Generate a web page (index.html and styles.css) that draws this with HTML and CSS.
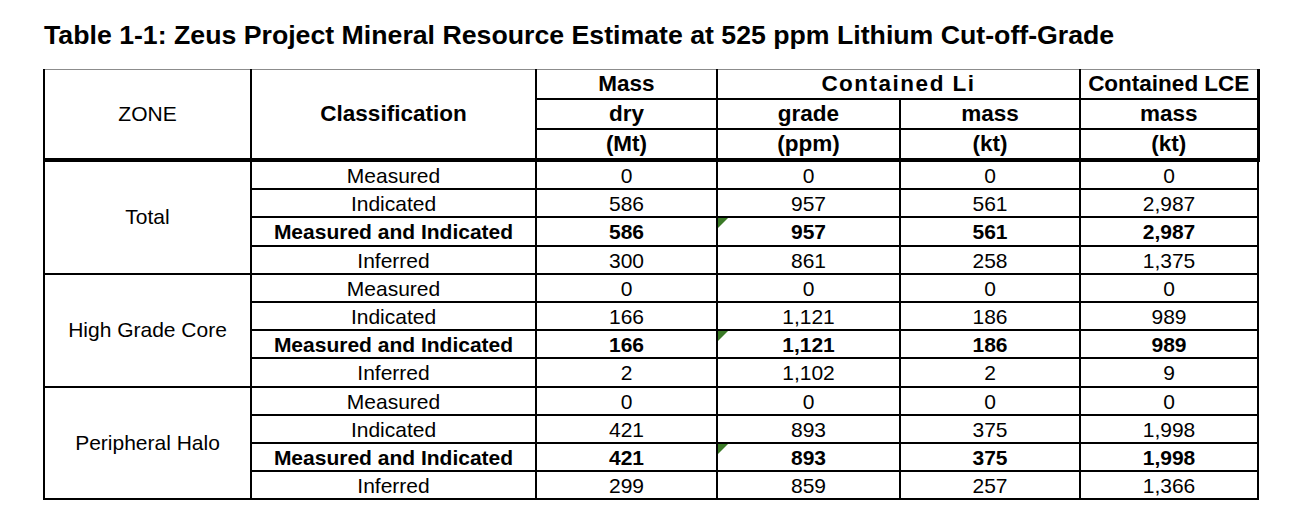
FILE: index.html
```html
<!DOCTYPE html>
<html lang="en">
<head>
<meta charset="utf-8">
<title>Zeus Project Mineral Resource Estimate</title>
<link rel="stylesheet" href="styles.css">
</head>
<body>
<h1 class="title">Table 1-1: Zeus Project Mineral Resource Estimate at 525 ppm Lithium Cut-off-Grade</h1>
<table class="resource">
  <colgroup>
    <col class="c-zone">
    <col class="c-class">
    <col class="c-mass">
    <col class="c-grade">
    <col class="c-limass">
    <col class="c-lce">
  </colgroup>
  <thead>
    <tr class="h1">
      <th rowspan="3" class="zone-h">ZONE</th>
      <th rowspan="3" class="class-h">Classification</th>
      <th>Mass</th>
      <th colspan="2" class="li-h">Contained Li</th>
      <th class="last">Contained LCE</th>
    </tr>
    <tr>
      <th>dry</th>
      <th>grade</th>
      <th>mass</th>
      <th class="last">mass</th>
    </tr>
    <tr class="h3">
      <th>(Mt)</th>
      <th>(ppm)</th>
      <th>(kt)</th>
      <th class="last">(kt)</th>
    </tr>
  </thead>
  <tbody>
    <tr><td rowspan="4" class="zone">Total</td><td>Measured</td><td>0</td><td>0</td><td>0</td><td>0</td></tr>
    <tr><td>Indicated</td><td>586</td><td>957</td><td>561</td><td>2,987</td></tr>
    <tr class="sum"><td>Measured and Indicated</td><td>586</td><td class="flag">957</td><td>561</td><td>2,987</td></tr>
    <tr><td>Inferred</td><td>300</td><td>861</td><td>258</td><td>1,375</td></tr>

    <tr><td rowspan="4" class="zone">High Grade Core</td><td>Measured</td><td>0</td><td>0</td><td>0</td><td>0</td></tr>
    <tr><td>Indicated</td><td>166</td><td>1,121</td><td>186</td><td>989</td></tr>
    <tr class="sum"><td>Measured and Indicated</td><td>166</td><td class="flag">1,121</td><td>186</td><td>989</td></tr>
    <tr><td>Inferred</td><td>2</td><td>1,102</td><td>2</td><td>9</td></tr>

    <tr><td rowspan="4" class="zone">Peripheral Halo</td><td>Measured</td><td>0</td><td>0</td><td>0</td><td>0</td></tr>
    <tr><td>Indicated</td><td>421</td><td>893</td><td>375</td><td>1,998</td></tr>
    <tr class="sum"><td>Measured and Indicated</td><td>421</td><td class="flag">893</td><td>375</td><td>1,998</td></tr>
    <tr><td>Inferred</td><td>299</td><td>859</td><td>257</td><td>1,366</td></tr>
  </tbody>
</table>
</body>
</html>
```
FILE: styles.css
```css
html, body {
  margin: 0;
  padding: 0;
  background: #ffffff;
  color: #000000;
  font-family: "Liberation Sans", Arial, sans-serif;
}

.title {
  margin: 20px 0 0 44px;
  font-size: 26.7px;
  line-height: 30px;
  font-weight: bold;
  letter-spacing: 0;
}

.resource {
  margin: 19px 0 0 43px;
  border-collapse: collapse;
  table-layout: fixed;
  width: 1214px;
}

.c-zone { width: 207px; }
.c-class { width: 285px; }
.c-mass { width: 181px; }
.c-grade { width: 183px; }
.c-limass { width: 180px; }
.c-lce { width: 178px; }

.resource th,
.resource td {
  border: 2px solid #000;
  padding: 0;
  text-align: center;
  vertical-align: middle;
  white-space: nowrap;
}

.resource th {
  height: 28px;
  font-size: 22.5px;
  font-weight: bold;
  line-height: 26px;
}

.resource .h1 th {
  border-top: 1px solid #8c8c8c;
}

.resource .h3 th,
.resource th[rowspan] {
  border-bottom: 4px solid #000;
}

.resource th.last {
  border-right: 3px solid #000;
}

.resource th.zone-h {
  font-weight: normal;
  font-size: 21px;
}

.resource th.li-h {
  letter-spacing: 1.5px;
}

.resource td {
  height: 24.2px;
  font-size: 21px;
  line-height: 24px;
  padding-top: 2px;
  box-sizing: content-box;
}

.resource td.zone {
  padding-top: 0;
}

.resource tr.sum td {
  font-weight: bold;
}

.resource td.flag {
  position: relative;
}

.resource td.flag::before {
  content: "";
  position: absolute;
  left: 0;
  top: 0;
  width: 0;
  height: 0;
  border-top: 10px solid #3b7a27;
  border-right: 10px solid transparent;
}
```
